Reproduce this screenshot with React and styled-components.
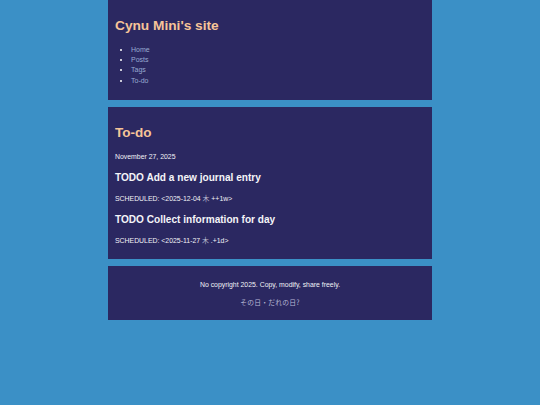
import React from 'react';
import styled, { createGlobalStyle } from 'styled-components';

const Global = createGlobalStyle`
    html, body {
        margin: 0;
        background: #3b90c6;
        font-family: "Liberation Sans", Arial, "Noto Sans CJK JP", sans-serif;
    }
`

const Page = styled.div`
    width: 324px;
    margin: 0 auto;
    display: flex;
    flex-direction: column;
    gap: 7px;
`

const Panel = styled.div`
    background: #2b2861;
    color: #f2f2f6;
    padding: ${props => props.pad || '0 7px'};
    text-align: ${props => props.center ? 'center' : 'left'};
`

const SiteTitle = styled.h1`
    margin: 18.2px 0 0;
    font-size: 13.7px;
    line-height: 16px;
    font-weight: bold;
    color: #f6c498;
`

const Nav = styled.ul`
    margin: 10.4px 0 0;
    padding-left: 16px;
    font-size: 7px;
    line-height: 10.4px;
    color: #ffffff;
`

const NavLink = styled.a`
    color: #98aad2;
    text-decoration: none;
`

const Heading = styled.h2`
    margin: 0;
    font-size: 13.5px;
    line-height: 16.2px;
    font-weight: bold;
    color: #f6c498;
`

const Task = styled.h3`
    margin: ${props => props.gap}px 0 0;
    font-size: 10.1px;
    line-height: 12px;
    font-weight: bold;
    color: #f4f4f8;
`

const Small = styled.p`
    margin: ${props => props.gap}px 0 0;
    font-size: 6.9px;
    line-height: 8.2px;
`

const Cjk = styled.span`
    font-family: "Noto Sans CJK JP", sans-serif;
    color: #b9b9cf;
    line-height: 0;
`

const Motto = styled.a`
    display: block;
    margin-top: 8.8px;
    font-size: 6.8px;
    line-height: 8.2px;
    color: #b8b8d6;
    text-decoration: none;
    font-family: "Noto Sans CJK JP", sans-serif;
    letter-spacing: 0.2px;
`

const links = ['Home', 'Posts', 'Tags', 'To-do'];

const todos = [
    { title: 'TODO Add a new journal entry', date: '2025-12-04', repeat: '++1w' },
    { title: 'TODO Collect information for day', date: '2025-11-27', repeat: '.+1d' },
];

export default function App() {
    return (
        <>
            <Global />
            <Page>
                <Panel pad="0 7px 13.8px">
                    <SiteTitle>Cynu Mini's site</SiteTitle>
                    <Nav>
                        {links.map(l => <li key={l}><NavLink href="#">{l}</NavLink></li>)}
                    </Nav>
                </Panel>
                <Panel pad="17.9px 7px 13.9px">
                    <Heading>To-do</Heading>
                    <Small gap={11.8}>November 27, 2025</Small>
                    {todos.map(t => (
                        <React.Fragment key={t.title}>
                            <Task gap={10.9}>{t.title}</Task>
                            <Small gap={10.9}>SCHEDULED: &lt;{t.date} <Cjk>木</Cjk> {t.repeat}&gt;</Small>
                        </React.Fragment>
                    ))}
                </Panel>
                <Panel center pad="14.9px 7px 13.9px">
                    <Small gap={0}>No copyright 2025. Copy, modify, share freely.</Small>
                    <Motto href="#">その日・だれの日?</Motto>
                </Panel>
            </Page>
        </>
    );
}
